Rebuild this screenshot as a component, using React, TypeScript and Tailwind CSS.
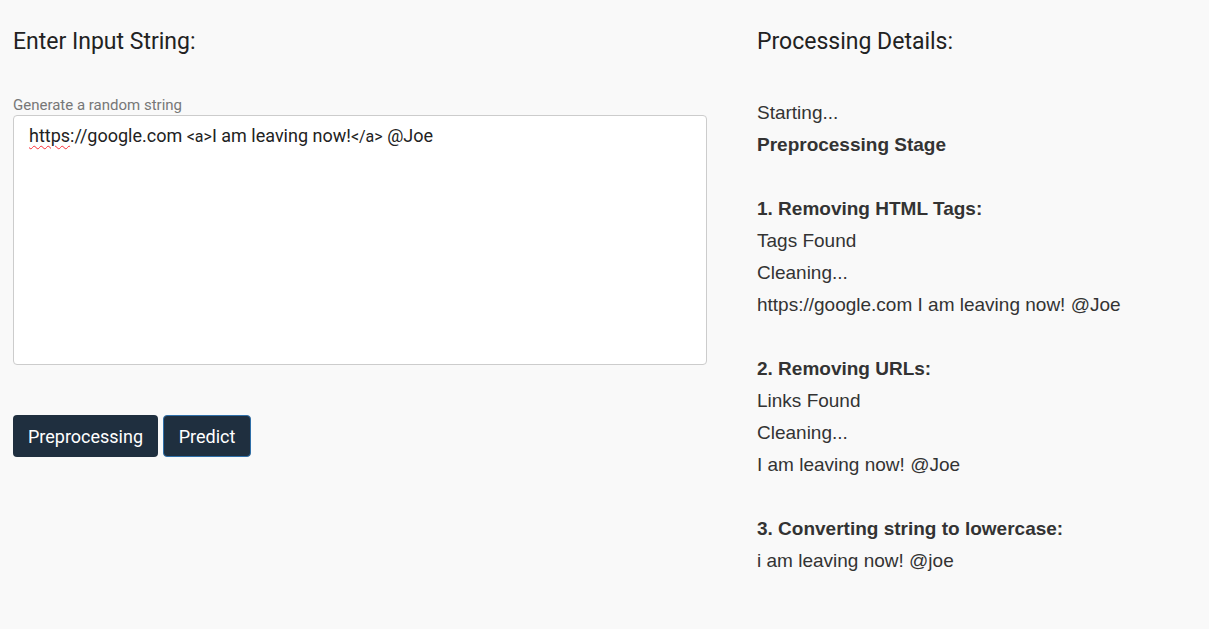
export default function App() {
  const lines: { text: string; bold?: boolean }[] = [
    { text: "Starting..." },
    { text: "Preprocessing Stage", bold: true },
    { text: "" },
    { text: "1. Removing HTML Tags:", bold: true },
    { text: "Tags Found" },
    { text: "Cleaning..." },
    { text: "https://google.com I am leaving now! @Joe" },
    { text: "" },
    { text: "2. Removing URLs:", bold: true },
    { text: "Links Found" },
    { text: "Cleaning..." },
    { text: "I am leaving now! @Joe" },
    { text: "" },
    { text: "3. Converting string to lowercase:", bold: true },
    { text: "i am leaving now! @joe" },
  ]

  return (
    <div className="min-h-screen bg-[#f9f9f9] text-[#222] font-['Roboto',sans-serif]">
      <div className="flex px-[13px] pt-[28px]">
        {/* Input */}
        <div className="w-[694px]">
          <h2 className="text-[23px] leading-[28px] text-[#222]">Enter Input String:</h2>
          <label className="block mt-[40px] text-[15px] leading-[18px] text-[#777]">Generate a random string</label>
          <div className="mt-[1px] h-[250px] rounded border border-[#ccc] bg-white px-[15px] py-[9px] text-[18px] leading-[22px] text-[#222]">
            <span className="underline decoration-wavy decoration-red-500 decoration-1 underline-offset-[3px]">https</span>
            ://google.com <span className="text-[16px]">&lt;a&gt;</span>I am leaving now!<span className="text-[16px]">&lt;/a&gt;</span> @Joe
          </div>
          <div className="mt-[50px] flex gap-[5px]">
            <button className="h-[42px] w-[145px] rounded bg-[#1f2f3f] text-[18px] text-white">Preprocessing</button>
            <button className="h-[42px] w-[88px] rounded border border-[#2f6fa8] bg-[#1f2f3f] text-[18px] text-white">Predict</button>
          </div>
        </div>

        {/* Output */}
        <div className="ml-[50px] flex-1">
          <h2 className="text-[23px] leading-[28px] text-[#222]">Processing Details:</h2>
          <div className="mt-[41px] font-['Liberation_Sans',Arial,sans-serif] text-[19px] leading-[32px] text-[#333]">
            {lines.map((l, i) => (
              <div key={i} className={l.bold ? "font-bold h-[32px]" : "h-[32px]"}>
                {l.text}
              </div>
            ))}
          </div>
        </div>
      </div>
    </div>
  )
}
